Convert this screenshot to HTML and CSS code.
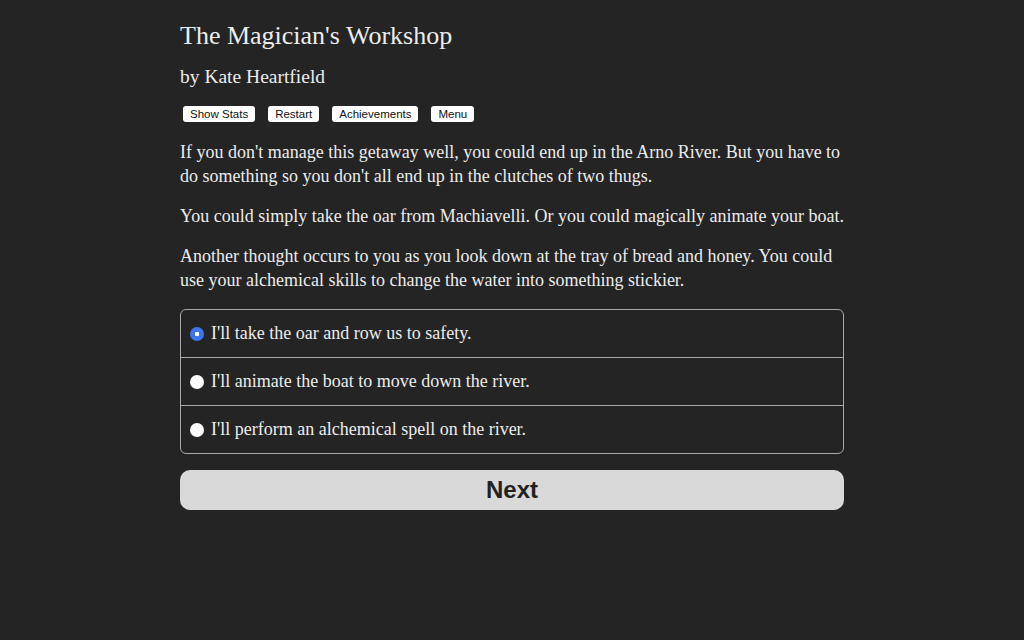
FILE: index.html
```html
<!DOCTYPE html>
<html>
<head>
    <title>The Magician's Workshop</title>
    <link rel="stylesheet" href="styles.css">
</head>
<body>
    <div class="container">
        <h1 class="title">The Magician's Workshop</h1>
        <h2 class="author">by Kate Heartfield</h2>

        <div class="buttons">
            <button class="spacedLink">Show Stats</button>
            <button class="spacedLink">Restart</button>
            <button class="spacedLink">Achievements</button>
            <button class="spacedLink">Menu</button>
        </div>

        <div class="text">
            <p>If you don't manage this getaway well, you could end up in the Arno River. But you have to do something so you don't all end up in the clutches of two thugs.</p>
            <p>You could simply take the oar from Machiavelli. Or you could magically animate your boat.</p>
            <p>Another thought occurs to you as you look down at the tray of bread and honey. You could use your alchemical skills to change the water into something stickier.</p>
        </div>

        <form class="choice">
            <label class="option"><input type="radio" name="choice" value="0" checked> I'll take the oar and row us to safety.</label>
            <label class="option"><input type="radio" name="choice" value="1"> I'll animate the boat to move down the river.</label>
            <label class="option"><input type="radio" name="choice" value="2"> I'll perform an alchemical spell on the river.</label>
        </form>

        <button class="next">Next</button>
    </div>
</body>
</html>
```

FILE: styles.css
```css
body {
    margin: 0;
    background-color: #242424;
    color: #ececec;
    font-family: "Liberation Serif", serif;
}

.container {
    width: 664px;
    margin: 0 auto;
    padding-top: 18px;
}

.title {
    font-size: 26px;
    font-weight: normal;
    margin: 0 0 11px;
    line-height: 36px;
}

.author {
    font-size: 19.5px;
    font-weight: normal;
    margin: 0 0 17px;
    line-height: 24px;
}

.buttons {
    display: flex;
    gap: 13px;
    padding-left: 3px;
    margin-bottom: 18px;
}

.spacedLink {
    font-family: "Liberation Sans", Arial, sans-serif;
    font-size: 11.5px;
    background: #fff;
    color: #111;
    border: none;
    border-radius: 3px;
    padding: 2px 7px;
    height: 16px;
    line-height: 12px;
}

.text p {
    font-size: 18px;
    line-height: 24px;
    margin: 0 0 16px;
}

.choice {
    border: 1px solid #a8a8a8;
    border-radius: 6px;
    margin-top: 17px;
}

.option {
    display: flex;
    align-items: center;
    height: 47px;
    padding-left: 9px;
    font-size: 18px;
    border-top: 1px solid #a8a8a8;
}

.option:first-child {
    border-top: none;
}

/* round radio like the mac one: white, or blue with a white dot */
.option input {
    appearance: none;
    margin: 0 7px 0 0;
    width: 14px;
    height: 14px;
    border-radius: 50%;
    background: #fff;
}

.option input:checked {
    background: radial-gradient(circle, #fff 0 2px, #3b76f0 2.5px);
}

.next {
    display: block;
    width: 100%;
    height: 40px;
    margin-top: 16px;
    background: #d9d9d9;
    border: none;
    border-radius: 10px;
    font-family: "Liberation Sans", Arial, sans-serif;
    font-weight: bold;
    font-size: 24px;
    color: #222;
}
```
